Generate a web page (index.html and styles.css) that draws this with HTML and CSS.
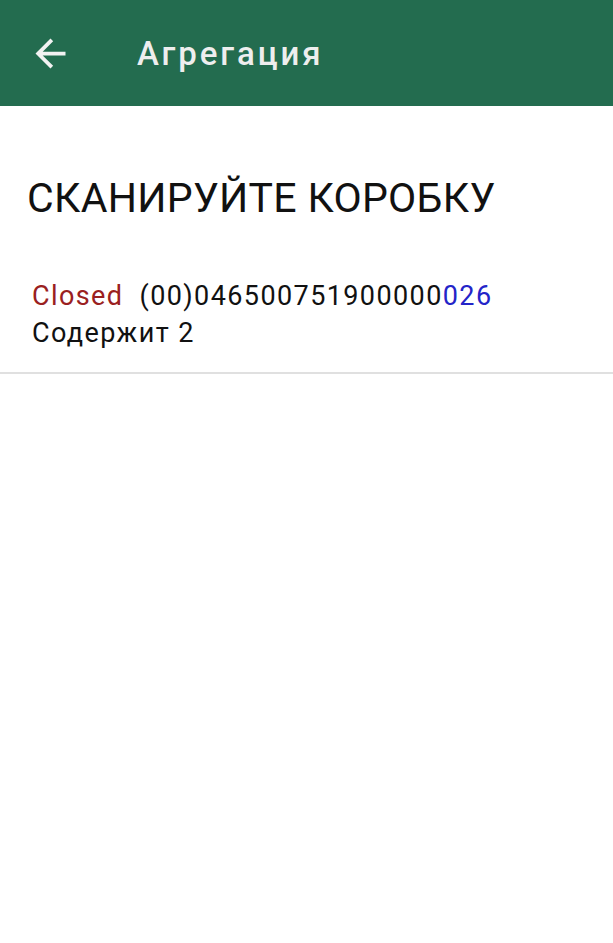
FILE: index.html
```html
<!DOCTYPE html>
<html lang="ru">
<head>
  <meta charset="UTF-8" />
  <meta name="viewport" content="width=device-width, initial-scale=1.0" />
  <title>Агрегация</title>
  <link rel="stylesheet" href="styles.css">
</head>
<body>
  <header class="app-bar">
    <button class="back-btn" aria-label="Назад">
      <svg width="45" height="45" viewBox="0 0 24 24"><path d="M20 11H7.83l5.59-5.59L12 4l-8 8 8 8 1.41-1.41L7.83 13H20v-2z" fill="#f2f2f2"/></svg>
    </button>
    <h1 class="app-title">Агрегация</h1>
  </header>

  <main class="content">
    <h2 class="prompt">СКАНИРУЙТЕ КОРОБКУ</h2>

    <ul class="box-list">
      <li class="box-item">
        <div class="box-code">
          <span class="status closed">Closed</span>
          <span class="code">(00)046500751900000<span class="code-tail">026</span></span>
        </div>
        <div class="box-count">Содержит 2</div>
      </li>
    </ul>
  </main>
</body>
</html>
```

FILE: styles.css
```css
body {
  margin: 0;
  font-family: Roboto, "Noto Sans", sans-serif;
  background-color: #fff;
  color: #111;
}
.app-bar {
  height: 106px;
  background-color: #236c4f;
  display: flex;
  align-items: center;
}
.back-btn {
  background: none;
  border: none;
  padding: 0;
  margin-left: 28px;
  width: 45px;
  height: 45px;
  display: flex;
  cursor: pointer;
}
.app-title {
  margin: 0 0 0 64px;
  font-size: 33px;
  font-weight: 500;
  color: #eeeeee;
  letter-spacing: 2.9px;
}
.prompt {
  margin: 0;
  padding: 64px 0 0 27px;
  font-size: 41px;
  font-weight: 400;
  color: #111;
  line-height: 56px;
  letter-spacing: 0.3px;
}
.box-list {
  list-style: none;
  margin: 0;
  padding: 0;
}
.box-item {
  padding: 52px 0 20px 32px;
  border-bottom: 2px solid #e0e0e0;
  font-size: 27px;
  line-height: 37px;
  letter-spacing: 1.4px;
}
.status {
  margin-right: 8px;
}
.closed {
  color: #9a2020;
}
.code-tail {
  color: #2424c8;
}
```
